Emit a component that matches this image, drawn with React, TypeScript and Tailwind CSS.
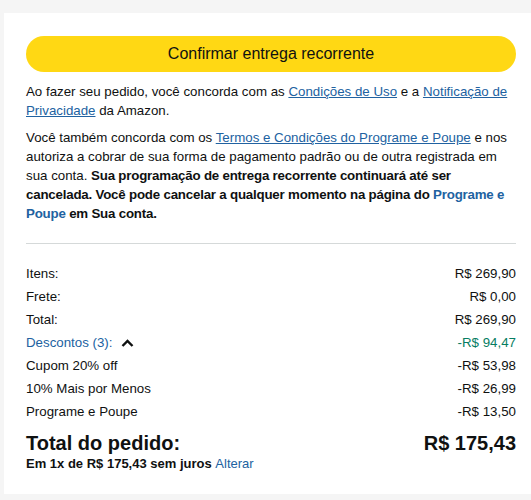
import React from 'react';

function Row({ label, value, labelClass = 'text-[#0f1111]', valueClass = 'text-[#0f1111]', children }: any) {
  return (
    <div className="flex items-center justify-between h-[23px]">
      <div className={`flex items-center gap-[9px] ${labelClass}`}>
        <span>{label}</span>
        {children}
      </div>
      <span className={valueClass}>{value}</span>
    </div>
  );
}

export default function App() {
  return (
    <div className="min-h-[500px] bg-[#f5f5f5] pt-[13px] pl-[4px] font-['Liberation_Sans',Arial,sans-serif] text-[#0f1111]">
      <div className="bg-white h-[481px] pl-[22px] pr-[15px] pt-[23px]">
        {/* Place order button */}
        <button className="w-full h-[36px] rounded-full bg-[#ffd814] text-[16px] text-[#0f1111]">
          Confirmar entrega recorrente
        </button>

        {/* Legal text */}
        <p className="mt-[10px] text-[13.3px] leading-[19px]">
          Ao fazer seu pedido, você concorda com as{' '}
          <a className="text-[#2162a1] underline">Condições de Uso</a> e a{' '}
          <a className="text-[#2162a1] underline">Notificação de Privacidade</a> da Amazon.
        </p>
        <p className="mt-[8px] text-[13.3px] leading-[19px]">
          Você também concorda com os{' '}
          <a className="text-[#2162a1] underline">Termos e Condições do Programe e Poupe</a> e nos
          autoriza a cobrar de sua forma de pagamento padrão ou de outra registrada em sua conta.{' '}
          <b className="tracking-[-0.2px]">
            Sua programação de entrega recorrente continuará até ser cancelada. Você pode cancelar a
            qualquer momento na página do <a className="text-[#2162a1]">Programe e Poupe</a> em Sua conta.
          </b>
        </p>

        <div className="mt-[20px] border-t border-[#d5d9d9]" />

        {/* Summary */}
        <div className="mt-[18px] text-[13.3px]">
          <Row label="Itens:" value="R$ 269,90" />
          <Row label="Frete:" value="R$ 0,00" />
          <Row label="Total:" value="R$ 269,90" />
          <Row label="Descontos (3):" value="-R$ 94,47" labelClass="text-[#2162a1]" valueClass="text-[#067d62]">
            <svg width="13" height="8" viewBox="0 0 13 8" fill="none">
              <path d="M1.5 7L6.5 2l5 5" stroke="#0f1111" strokeWidth="2.4" />
            </svg>
          </Row>
          <Row label="Cupom 20% off" value="-R$ 53,98" />
          <Row label="10% Mais por Menos" value="-R$ 26,99" />
          <Row label="Programe e Poupe" value="-R$ 13,50" />
        </div>

        <div className="mt-[8px] flex items-end justify-between text-[20px] font-bold leading-[24px]">
          <span>Total do pedido:</span>
          <span>R$ 175,43</span>
        </div>
        <div className="text-[13px] font-bold leading-[17px]">
          Em 1x de R$ 175,43 sem juros <a className="text-[#2162a1] font-normal">Alterar</a>
        </div>
      </div>
    </div>
  );
}
